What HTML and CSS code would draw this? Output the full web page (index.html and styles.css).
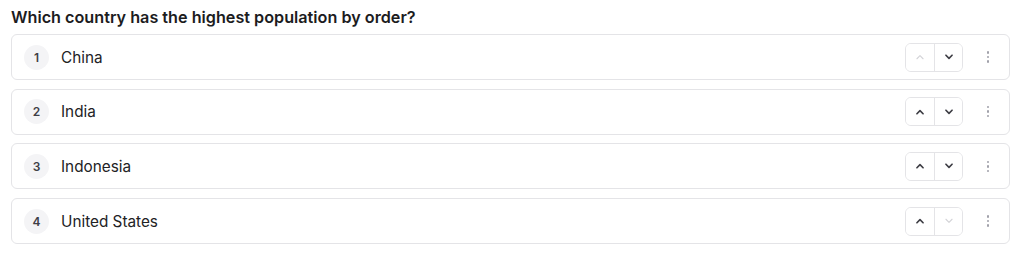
FILE: index.html
```html
<!DOCTYPE html>
<html lang="en">
<head>
    <meta charset="UTF-8">
    <meta name="viewport" content="width=device-width, initial-scale=1.0">
    <title>Ranking Question</title>
    <link rel="stylesheet" href="styles.css">
</head>
<body>
    <div class="container">
        <div class="question">Which country has the highest population by order?</div>

        <div class="rank-list">
            <div class="rank-item">
                <span class="rank-num">1</span>
                <span class="rank-label">China</span>
                <div class="move-group">
                    <button class="move-btn" disabled>
                        <svg viewBox="0 0 16 16"><path d="M4.5 10 L8 6.5 L11.5 10"/></svg>
                    </button>
                    <button class="move-btn">
                        <svg viewBox="0 0 16 16"><path d="M4.5 6 L8 9.5 L11.5 6"/></svg>
                    </button>
                </div>
                <button class="more-btn"><span></span><span></span><span></span></button>
            </div>

            <div class="rank-item">
                <span class="rank-num">2</span>
                <span class="rank-label">India</span>
                <div class="move-group">
                    <button class="move-btn">
                        <svg viewBox="0 0 16 16"><path d="M4.5 10 L8 6.5 L11.5 10"/></svg>
                    </button>
                    <button class="move-btn">
                        <svg viewBox="0 0 16 16"><path d="M4.5 6 L8 9.5 L11.5 6"/></svg>
                    </button>
                </div>
                <button class="more-btn"><span></span><span></span><span></span></button>
            </div>

            <div class="rank-item">
                <span class="rank-num">3</span>
                <span class="rank-label">Indonesia</span>
                <div class="move-group">
                    <button class="move-btn">
                        <svg viewBox="0 0 16 16"><path d="M4.5 10 L8 6.5 L11.5 10"/></svg>
                    </button>
                    <button class="move-btn">
                        <svg viewBox="0 0 16 16"><path d="M4.5 6 L8 9.5 L11.5 6"/></svg>
                    </button>
                </div>
                <button class="more-btn"><span></span><span></span><span></span></button>
            </div>

            <div class="rank-item">
                <span class="rank-num">4</span>
                <span class="rank-label">United States</span>
                <div class="move-group">
                    <button class="move-btn">
                        <svg viewBox="0 0 16 16"><path d="M4.5 10 L8 6.5 L11.5 10"/></svg>
                    </button>
                    <button class="move-btn" disabled>
                        <svg viewBox="0 0 16 16"><path d="M4.5 6 L8 9.5 L11.5 6"/></svg>
                    </button>
                </div>
                <button class="more-btn"><span></span><span></span><span></span></button>
            </div>
        </div>
    </div>
</body>
</html>
```

FILE: styles.css
```css
* { margin: 0; padding: 0; box-sizing: border-box; }
:root {
    --text: #1c1c1e; --muted: #6b7280; --border: #e4e4e7;
    --badge: #f4f4f6; --disabled: #d4d4d8;
}
body {
    font-family: Inter, "Noto Sans", sans-serif;
    background: #fff; color: var(--text);
}
.container { padding: 7px 14px 0 11px; }
.question {
    font-size: 16.2px; font-weight: 600; line-height: 20px;
    margin-bottom: 7px;
}
.rank-list { display: flex; flex-direction: column; gap: 8.7px; }
.rank-item {
    height: 46px; border: 1px solid var(--border); border-radius: 6px;
    display: flex; align-items: center; padding: 0 11px 0 12px;
}
.rank-num {
    width: 25px; height: 25px; border-radius: 50%;
    background: var(--badge); display: flex; align-items: center;
    justify-content: center; font-size: 12px; font-weight: 600;
    color: #3f3f46;
}
.rank-label { margin-left: 12px; font-size: 15.3px; flex: 1; color: #222225; }
.move-group {
    display: flex; border: 1px solid var(--border); border-radius: 6px;
    height: 29px; overflow: hidden;
}
.move-btn {
    width: 28px; background: #fff; border: none; cursor: pointer;
    display: flex; align-items: center; justify-content: center;
}
.move-btn + .move-btn { border-left: 1px solid var(--border); }
.move-btn svg {
    width: 14px; height: 14px; fill: none; stroke: #3f3f46;
    stroke-width: 1.9; stroke-linecap: round; stroke-linejoin: round;
}
.move-btn:disabled { cursor: default; }
.move-btn:disabled svg { stroke: var(--disabled); stroke-width: 1.3; }
.more-btn {
    margin-left: 15px; width: 20px; height: 20px; background: none;
    border: none; cursor: pointer; display: flex; flex-direction: column;
    align-items: center; justify-content: center; gap: 2px;
}
.more-btn span { width: 2.5px; height: 2.5px; border-radius: 50%; background: #a1a1aa; }
```
